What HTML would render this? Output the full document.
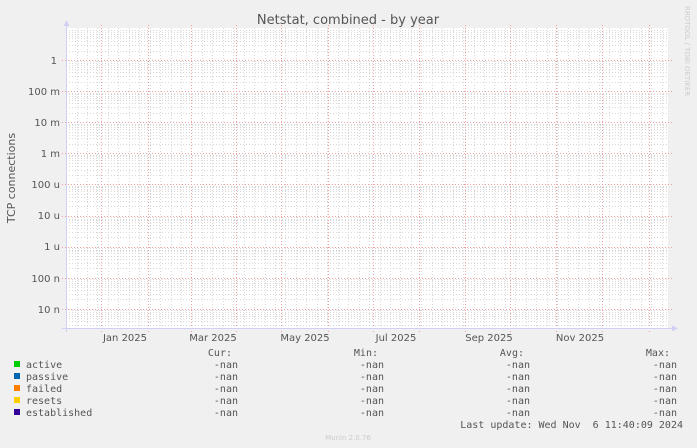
<!DOCTYPE html>
<html><head><meta charset="utf-8"><style>
html,body{margin:0;padding:0;background:#f0f0f0;}
body{width:697px;height:448px;overflow:hidden;position:relative;font-family:"DejaVu Sans","Liberation Sans",sans-serif;}
svg{position:absolute;left:0;top:0;}
</style></head><body>
<svg id="s" width="697" height="448" xmlns="http://www.w3.org/2000/svg">
<rect x="0" y="0" width="697" height="448" fill="#f0f0f0"/>
<rect x="66" y="28" width="602" height="300" fill="#ffffff"/>
<g id="grid"></g>
<text x="348" y="24" text-anchor="middle" font-family="DejaVu Sans, sans-serif" font-size="13" fill="#555">Netstat, combined - by year</text>
<text transform="translate(15,178) rotate(-90)" text-anchor="middle" font-family="DejaVu Sans, sans-serif" font-size="11" fill="#555">TCP connections</text>
<text transform="translate(685,6) rotate(90)" font-family="DejaVu Sans, sans-serif" font-size="7" fill="#ccc">RRDTOOL / TOBI OETIKER</text>
<g font-family="DejaVu Sans, sans-serif" font-size="10" fill="#555" text-anchor="end">
<text x="57" y="64">1</text>
<text x="60" y="95">100 m</text>
<text x="60" y="126">10 m</text>
<text x="60" y="157">1 m</text>
<text x="60" y="188">100 u</text>
<text x="60" y="219">10 u</text>
<text x="60" y="250">1 u</text>
<text x="60" y="282">100 n</text>
<text x="60" y="313">10 n</text>
</g>
<g font-family="DejaVu Sans, sans-serif" font-size="10" fill="#555" text-anchor="middle">
<text x="125" y="341">Jan 2025</text>
<text x="213" y="341">Mar 2025</text>
<text x="305" y="341">May 2025</text>
<text x="396" y="341">Jul 2025</text>
<text x="489" y="341">Sep 2025</text>
<text x="580" y="341">Nov 2025</text>
</g>
<rect x="14" y="361" width="6" height="6" fill="#00cc00"/>
<rect x="14" y="373" width="6" height="6" fill="#0066b3"/>
<rect x="14" y="385" width="6" height="6" fill="#ff8000"/>
<rect x="14" y="397" width="6" height="6" fill="#ffcc00"/>
<rect x="14" y="409" width="6" height="6" fill="#330099"/>
<g font-family="DejaVu Sans Mono, Liberation Mono, monospace" font-size="10" fill="#555">
<text x="26" y="368">active</text>
<text x="26" y="380">passive</text>
<text x="26" y="392">failed</text>
<text x="26" y="404">resets</text>
<text x="26" y="416">established</text>
<g text-anchor="end">
<text x="232" y="356">Cur:</text>
<text x="378" y="356">Min:</text>
<text x="524" y="356">Avg:</text>
<text x="670" y="356">Max:</text>
<text x="238" y="368">-nan</text><text x="384" y="368">-nan</text><text x="530" y="368">-nan</text><text x="677" y="368">-nan</text>
<text x="238" y="380">-nan</text><text x="384" y="380">-nan</text><text x="530" y="380">-nan</text><text x="677" y="380">-nan</text>
<text x="238" y="392">-nan</text><text x="384" y="392">-nan</text><text x="530" y="392">-nan</text><text x="677" y="392">-nan</text>
<text x="238" y="404">-nan</text><text x="384" y="404">-nan</text><text x="530" y="404">-nan</text><text x="677" y="404">-nan</text>
<text x="238" y="416">-nan</text><text x="384" y="416">-nan</text><text x="530" y="416">-nan</text><text x="677" y="416">-nan</text>
<text x="683" y="428" style="white-space:pre" xml:space="preserve">Last update: Wed Nov  6 11:40:09 2024</text>
</g>
</g>
<text x="348" y="440" text-anchor="middle" font-family="DejaVu Sans, sans-serif" font-size="7" fill="#ccc">Munin 2.0.76</text>
</svg>
<script>
var g=document.getElementById('grid'),h='';
function L(x1,y1,x2,y2,c,d){h+='<line x1="'+x1+'" y1="'+y1+'" x2="'+x2+'" y2="'+y2+'" stroke="'+c+'" stroke-width="1" stroke-dasharray="'+d+'"/>';}
for(var x=76.5;x<668;x+=10.45){L(Math.round(x)+.5,28,Math.round(x)+.5,328,'#d8d8d8','1,2');}
var majors=[];for(var i=-1;i<10;i++)majors.push(60+31.1*i);
for(var i=0;i<majors.length;i++){var yb=majors[i];for(var m=2;m<10;m++){var y=Math.round(yb-31.1*Math.log10(m))+.5;if(y>28&&y<328)L(66,y,668,y,'#d8d8d8','1,2');}}
for(var i=1;i<10;i++){var y=Math.round(majors[i])+.5;L(62,y,672,y,'#f0a0a0','1,2');}
var mx=[101,148,191,236,281,328,373,419,465,510,556,602,649];
for(var i=0;i<mx.length;i++)L(mx[i]+.5,25,mx[i]+.5,332,'#f0a0a0','1,2');
h+='<line x1="66.5" y1="25" x2="66.5" y2="332" stroke="#d0d0f4"/>';
h+='<line x1="62" y1="328.5" x2="673" y2="328.5" stroke="#d0d0f4"/>';
h+='<polygon points="63.5,26 69.5,26 66.5,20" fill="#d0d0f4"/>';
h+='<polygon points="672,325.5 672,331.5 678,328.5" fill="#d0d0f4"/>';
g.innerHTML=h;
</script>
</body></html>
